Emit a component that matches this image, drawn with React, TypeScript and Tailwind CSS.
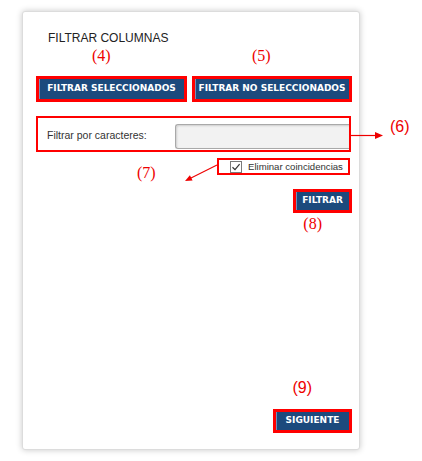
export default function App() {
  const btn =
    "flex items-center justify-center border-[3px] border-[#ff0000] bg-[#1c4a7d] text-white font-bold text-[9px] font-['DejaVu_Sans',Verdana,sans-serif] shadow-[inset_1px_0_0_#6f90b8]";

  return (
    <div className="min-h-screen bg-white pl-[22px] pt-[11px] font-['Liberation_Sans',Arial,sans-serif]">
      <div className="relative flex h-[439px] w-[338px] flex-col rounded-[3px] border border-[#dcdcdc] bg-white pb-[16px] pl-[13px] pr-[7px] pt-[19px] shadow-[0_0_6px_rgba(0,0,0,0.22)]">
        <div className="ml-[12px] text-[12px] leading-[14px] text-[#222]">FILTRAR COLUMNAS</div>

        {/* labels over the buttons */}
        <div className="mt-[2px] flex h-[18px] gap-[5px] font-['Liberation_Serif','Times_New_Roman',serif] text-[16px] leading-[18px] text-[#ee0000]">
          <div className="w-[151px] pl-[56px]">(4)</div>
          <div className="w-[160px] pl-[60px]">(5)</div>
        </div>

        <div className="mt-[11px] flex gap-[5px]">
          <button className={`${btn} h-[26px] w-[151px]`}>FILTRAR SELECCIONADOS</button>
          <button className={`${btn} h-[26px] w-[160px]`}>FILTRAR NO SELECCIONADOS</button>
        </div>

        {/* filtro por caracteres */}
        <div className="mt-[14px] flex h-[36px] w-[315px] items-center border-2 border-[#ff0000] pl-[9px] pt-[4px]">
          <span className="w-[128px] shrink-0 whitespace-nowrap text-[10.5px] text-[#333]">Filtrar por caracteres:</span>
          <input
            className="h-[25px] min-w-0 flex-1 rounded-l-[3px] border border-r-0 border-[#a9a9a9] bg-[#f2f2f2] shadow-[inset_1px_1px_2px_rgba(0,0,0,0.15)] outline-none"
            readOnly
          />
        </div>

        <div className="mr-[2px] mt-[6px] flex h-[17px] w-[133px] items-center gap-[6px] self-end border-2 border-[#ff0000] pl-[11px]">
          <span className="flex h-[12px] w-[12px] shrink-0 items-center justify-center border border-[#7a7a7a] bg-white">
            <svg width="10" height="10" viewBox="0 0 10 10">
              <path d="M1.5 5.2 L4 7.6 L8.6 2.2" fill="none" stroke="#333" strokeWidth="1.2" />
            </svg>
          </span>
          <span className="whitespace-nowrap text-[9.6px] leading-[12px] text-[#333]">Eliminar coincidencias</span>
        </div>

        <button className={`${btn} mt-[14px] h-[24px] w-[59px] self-end`}>FILTRAR</button>
        <div className="mr-[30px] mt-[2px] self-end font-['Liberation_Serif','Times_New_Roman',serif] text-[16px] leading-[18px] text-[#ee0000]">
          (8)
        </div>

        <div className="mb-[12px] mr-[40px] mt-auto self-end font-['Liberation_Sans',Arial,sans-serif] text-[16px] leading-[18px] text-[#ee0000]">
          (9)
        </div>
        <button className={`${btn} h-[24px] w-[79px] self-end`}>SIGUIENTE</button>

        {/* annotation (6) */}
        <svg className="absolute left-[328px] top-[119px]" width="36" height="10" viewBox="0 0 36 10">
          <line x1="0" y1="4.5" x2="27" y2="4.5" stroke="#ee0000" strokeWidth="1.2" />
          <polygon points="24,1 32,4.5 24,8" fill="#ee0000" />
        </svg>
        <div className="absolute left-[367px] top-[106px] font-['Liberation_Sans',Arial,sans-serif] text-[16px] leading-[18px] text-[#ee0000]">
          (6)
        </div>

        {/* annotation (7) */}
        <svg className="absolute left-[160px] top-[150px]" width="36" height="22" viewBox="0 0 36 22">
          <line x1="34" y1="3" x2="6" y2="17" stroke="#ee0000" strokeWidth="1.2" />
          <polygon points="2,19 9.6,18.6 6.9,13.2" fill="#ee0000" />
        </svg>
        <div className="absolute left-[114px] top-[152px] font-['Liberation_Serif','Times_New_Roman',serif] text-[16px] leading-[18px] text-[#ee0000]">
          (7)
        </div>
      </div>
    </div>
  );
}
